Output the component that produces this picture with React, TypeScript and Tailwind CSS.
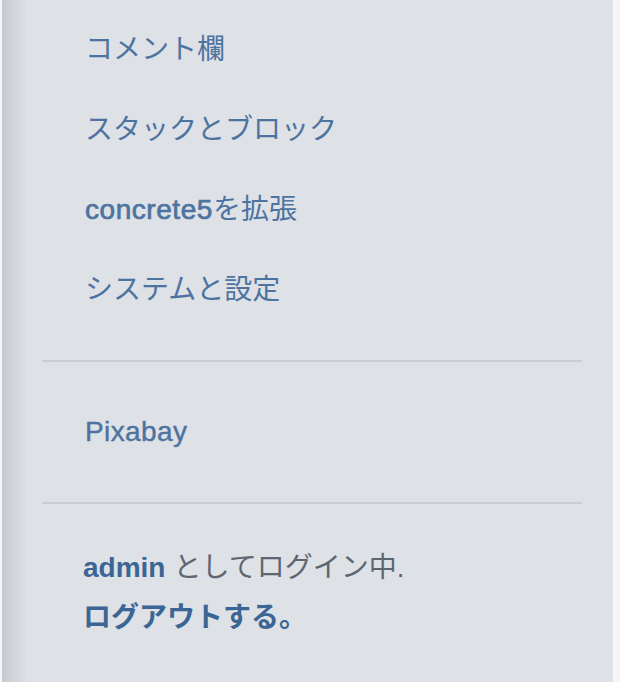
import React from "react";

const jp = { fontFamily: '"Liberation Sans", "Noto Sans CJK JP", sans-serif' };

export default function App() {
  const items = [
    { label: "コメント欄" },
    { label: "スタックとブロック" },
    { label: "concrete5を拡張", latin: "concrete5", rest: "を拡張" },
    { label: "システムと設定" },
  ];
  return (
    <div className="w-[620px] h-[682px] bg-[#f7f5f5] flex pl-[2px] pr-[7px] overflow-hidden" style={jp}>
      <div className="flex-1 h-full bg-[#dee1e6] relative">
        <div className="absolute left-0 top-0 bottom-0 w-[26px] bg-gradient-to-r from-[#c6cacf] to-[#dee1e6]" />
        <div className="relative flex flex-col">
          <ul className="pt-[10px] flex flex-col">
            {items.map((it) => (
              <li key={it.label} className="h-[80px] flex items-center pl-[83px] text-[28px] leading-none text-[#4d73a0]">
                {it.latin ? (
                  <span>
                    <span className="tracking-[0.55px] [-webkit-text-stroke:0.7px_#4d73a0]">{it.latin}</span>
                    <span>{it.rest}</span>
                  </span>
                ) : (
                  <span>{it.label}</span>
                )}
              </li>
            ))}
          </ul>
          <div className="mt-[30px] ml-[40px] mr-[31px] h-[2px] bg-[#c9ccd1]" />
          <div className="h-[140px] flex items-center pl-[83px] text-[28px] leading-none text-[#4d73a0] tracking-[0.4px] [-webkit-text-stroke:0.4px_#4d73a0]">
            Pixabay
          </div>
          <div className="ml-[40px] mr-[31px] h-[2px] bg-[#c9ccd1]" />
          <div className="pl-[81px] pt-[48px] text-[28px] leading-none">
            <div className="h-[32px] flex items-center">
              <span className="font-bold text-[#3b6594]">admin</span>
              <span className="text-[#5d6671] ml-[8px]">としてログイン中.</span>
            </div>
            <div className="h-[32px] mt-[18px] flex items-center font-bold text-[#3b6594]">
              ログアウトする。
            </div>
          </div>
        </div>
      </div>
    </div>
  );
}
